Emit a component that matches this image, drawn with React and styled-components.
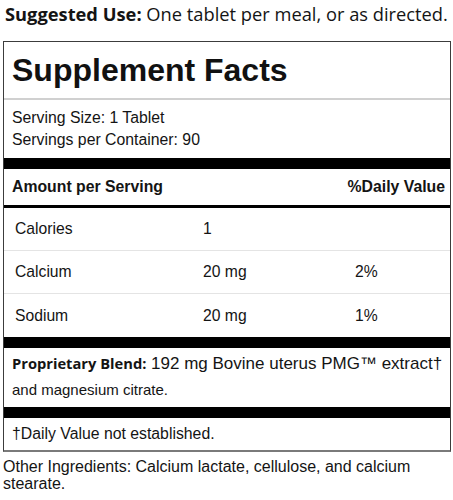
import React from 'react';
import styled, { createGlobalStyle } from 'styled-components';

const GlobalStyle = createGlobalStyle`
  html, body {
    margin: 0;
    padding: 0;
    background: #fff;
  }
  body {
    width: 453px;
    font-family: "Liberation Sans", Arial, sans-serif;
    color: #141414;
  }
`;

const rows = [
  { name: 'Calories', amount: '1', dv: '' },
  { name: 'Calcium', amount: '20 mg', dv: '2%' },
  { name: 'Sodium', amount: '20 mg', dv: '1%' },
];

const App = () => {
  return (
    <Page>
      <GlobalStyle />
      <Usage>
        <strong>Suggested Use:</strong> One tablet per meal, or as directed.
      </Usage>

      <Label>
        <Title>Supplement Facts</Title>

        <Serving>
          <div>Serving Size: 1 Tablet</div>
          <div>Servings per Container: 90</div>
        </Serving>

        <Bar />

        <HeaderRow>
          <span>Amount per Serving</span>
          <span>%Daily Value</span>
        </HeaderRow>

        {rows.map((row, i) => (
          <NutrientRow key={row.name} $last={i === rows.length - 1}>
            <span>{row.name}</span>
            <span>{row.amount}</span>
            <span>{row.dv}</span>
          </NutrientRow>
        ))}

        <Bar />

        <Blend>
          <BlendLine>
            <BlendName>Proprietary Blend:</BlendName> 192 mg Bovine uterus PMG™ extract†
          </BlendLine>
          <BlendRest>and magnesium citrate.</BlendRest>
        </Blend>

        <Bar />

        <Footnote>†Daily Value not established.</Footnote>
      </Label>

      <Other>Other Ingredients: Calcium lactate, cellulose, and calcium stearate.</Other>
    </Page>
  );
};

export default App;

const Page = styled.div`
  width: 453px;
  height: 500px;
  overflow: hidden;
`;

const Usage = styled.div`
  font-family: "Open Sans", "Noto Sans", sans-serif;
  font-size: 18.3px;
  line-height: 28px;
  padding: 0 0 0 5px;
  margin-bottom: 13px;
  color: #141414;
  white-space: nowrap;

  strong {
    font-weight: 700;
  }
`;

const Label = styled.div`
  margin: 0 2px 0 3px;
  border: 1px solid #3c3c3c;
  border-bottom: 2px solid #7a7a7a;
`;

const Title = styled.h1`
  margin: 0;
  height: 56px;
  padding-left: 8px;
  display: flex;
  align-items: center;
  font-size: 32px;
  font-weight: 700;
  color: #111;
  border-bottom: 2px solid #d0d0d0;
`;

const Serving = styled.div`
  height: 58px;
  box-sizing: border-box;
  padding: 7px 0 0 8px;
  font-size: 15.8px;
  line-height: 22px;
`;

const Bar = styled.div`
  height: 11px;
  background: #000;
`;

const HeaderRow = styled.div`
  height: 36px;
  display: flex;
  align-items: center;
  justify-content: space-between;
  padding: 0 5px 0 8px;
  font-size: 15.8px;
  font-weight: 700;
  border-bottom: 3px solid #000;
`;

const NutrientRow = styled.div`
  height: 43px;
  box-sizing: border-box;
  display: grid;
  grid-template-columns: 188px 152px 1fr;
  align-items: center;
  padding-left: 11px;
  font-size: 15.7px;
  border-bottom: ${(p) => (p.$last ? 'none' : '1px solid #e4e4e4')};
`;

const Blend = styled.div`
  height: 59px;
  box-sizing: border-box;
  padding: 2px 0 0 8px;
  line-height: 26px;
`;

const BlendLine = styled.div`
  font-size: 17px;
  white-space: nowrap;
`;

const BlendName = styled.span`
  font-family: "Open Sans", "Noto Sans", sans-serif;
  font-weight: 700;
  font-size: 14.7px;
`;

const BlendRest = styled.div`
  font-size: 15px;
`;

const Footnote = styled.div`
  height: 32px;
  display: flex;
  align-items: center;
  padding-left: 8px;
  font-size: 15.8px;
`;

const Other = styled.div`
  padding: 6px 20px 0 3px;
  font-size: 16px;
  line-height: 17px;
`;
